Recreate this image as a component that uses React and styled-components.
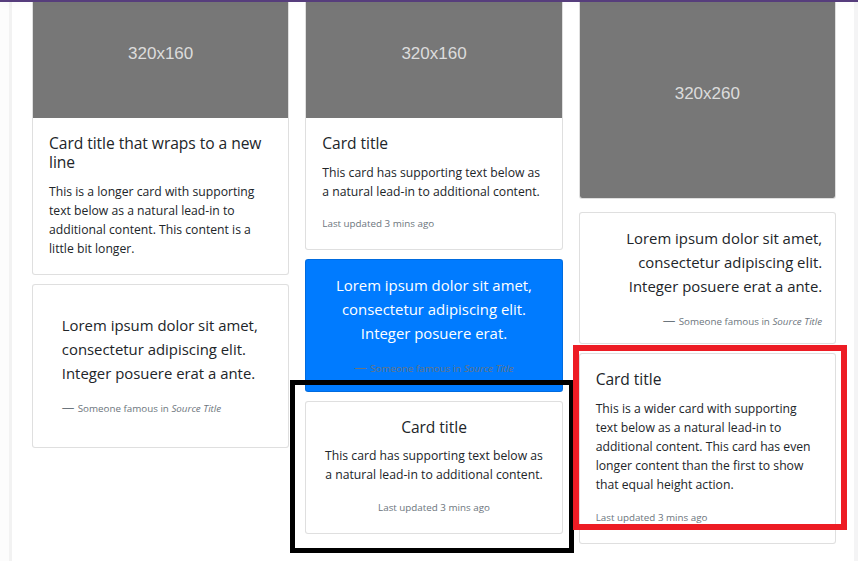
import React from 'react';
import styled, { createGlobalStyle } from 'styled-components';

const GlobalStyle = createGlobalStyle`
  *, *::before, *::after { box-sizing: border-box; }
  html, body { margin: 0; padding: 0; background: #fff; }
  body {
    font-family: "Open Sans", "Noto Sans", sans-serif;
    color: #212529;
    overflow: hidden;
  }
`;

const Page = styled.div`
  position: relative;
  display: flex;
  width: 858px;
  height: 561px;
  overflow: hidden;
  background: #fff;
`;

const TopBar = styled.div`
  position: absolute;
  top: 0;
  left: 0;
  right: 0;
  height: 2px;
  background: #563d7c;
  box-shadow: 0 1px 8px rgba(0, 0, 0, 0.09);
  z-index: 5;
`;

const SideRail = styled.div`
  flex: 0 0 12px;
  background: #fcfcfc;
  border-right: 3px solid #f2f2f2;
`;

const RightRail = styled.div`
  flex: 0 0 4px;
  background: #f4f4f5;
`;

const Main = styled.main`
  flex: 1;
  min-width: 0;
  padding: 0 18px 0 20px;
`;

const CardColumns = styled.div`
  display: grid;
  grid-template-columns: repeat(3, minmax(0, 1fr));
  column-gap: 16px;
  align-items: start;
  margin-top: -11px;
`;

const Column = styled.div`
  display: flex;
  flex-direction: column;
  gap: 9px;
`;

const Card = styled.div`
  display: flex;
  flex-direction: column;
  background: ${(p) => p.$bg || '#fff'};
  color: ${(p) => p.$fg || '#212529'};
  border: 1px solid rgba(0, 0, 0, 0.125);
  border-radius: 3.2px;
  text-align: ${(p) => p.$align || 'left'};
  padding: ${(p) => p.$pad || '0'};
  margin-bottom: ${(p) => p.$after || '0'};
`;

const Placeholder = styled.div`
  height: ${(p) => p.$h}px;
  background: #777;
  display: flex;
  align-items: center;
  justify-content: center;
  color: rgba(255, 255, 255, 0.75);
  font-family: "Liberation Sans", Arial, sans-serif;
  font-size: 17px;
  border-radius: ${(p) => (p.$full ? '2.2px' : '2.2px 2.2px 0 0')};
`;

const CardBody = styled.div`
  padding: 16px;
`;

const CardTitle = styled.h5`
  margin: 0 0 9.6px;
  font-size: 15.6px;
  font-weight: 400;
  line-height: 19px;
  letter-spacing: -0.05px;
`;

const CardText = styled.p`
  margin: 0 0 12.8px;
  font-size: 12.2px;
  line-height: 19px;
  &:last-child {
    margin-bottom: 0;
  }
`;

const Muted = styled.small`
  font-size: 9.8px;
  color: #6c757d;
`;

const Blockquote = styled.blockquote`
  margin: 0;
  padding: ${(p) => (p.$body ? '16px' : '0')};
  font-size: 14.9px;
`;

const Lead = styled.p`
  margin: 0 0 12.8px;
  line-height: 24px;
`;

const QuoteFooter = styled.footer`
  font-size: 12.6px;
  line-height: 19px;
  color: #6c757d;
  &::before {
    content: "\\2014\\00A0";
  }
`;

const QuoteSmall = styled.small`
  font-size: 9.8px;
  cite {
    font-style: italic;
  }
`;

const Highlight = styled.div`
  position: absolute;
  border: ${(p) => p.$w}px solid ${(p) => p.$color};
  pointer-events: none;
  z-index: 4;
`;

function Quote({ text, body }) {
  return (
    <Blockquote $body={body}>
      <Lead>{text}</Lead>
      <QuoteFooter>
        <QuoteSmall>
          Someone famous in <cite title="Source Title">Source Title</cite>
        </QuoteSmall>
      </QuoteFooter>
    </Blockquote>
  );
}

const highlights = [
  { x: 290, y: 380, w: 284, h: 173, b: 5, color: '#000' },
  { x: 573, y: 345, w: 274, h: 185, b: 6, color: '#ed1c24' },
];

export default function App() {
  return (
    <>
      <GlobalStyle />
      <Page>
        <TopBar />
        <SideRail />
        <Main>
          <CardColumns>
            <Column>
              <Card>
                <Placeholder $h={128}>320x160</Placeholder>
                <CardBody>
                  <CardTitle>Card title that wraps to a new line</CardTitle>
                  <CardText>
                    This is a longer card with supporting text below as a natural lead-in to
                    additional content. This content is a little bit longer.
                  </CardText>
                </CardBody>
              </Card>
              <Card $pad="12.8px">
                <Quote
                  body
                  text="Lorem ipsum dolor sit amet, consectetur adipiscing elit. Integer posuere erat a ante."
                />
              </Card>
            </Column>

            <Column>
              <Card>
                <Placeholder $h={128}>320x160</Placeholder>
                <CardBody>
                  <CardTitle>Card title</CardTitle>
                  <CardText>
                    This card has supporting text below as a natural lead-in to additional content.
                  </CardText>
                  <CardText>
                    <Muted>Last updated 3 mins ago</Muted>
                  </CardText>
                </CardBody>
              </Card>
              <Card $bg="#007bff" $fg="#fff" $align="center" $pad="12.8px">
                <Quote text="Lorem ipsum dolor sit amet, consectetur adipiscing elit. Integer posuere erat." />
              </Card>
              <Card $align="center">
                <CardBody>
                  <CardTitle>Card title</CardTitle>
                  <CardText>
                    This card has supporting text below as a natural lead-in to additional content.
                  </CardText>
                  <CardText>
                    <Muted>Last updated 3 mins ago</Muted>
                  </CardText>
                </CardBody>
              </Card>
            </Column>

            <Column>
              <Card $after="4px">
                <Placeholder $h={208} $full>
                  320x260
                </Placeholder>
              </Card>
              <Card $align="right" $pad="12.8px">
                <Quote text="Lorem ipsum dolor sit amet, consectetur adipiscing elit. Integer posuere erat a ante." />
              </Card>
              <Card>
                <CardBody>
                  <CardTitle>Card title</CardTitle>
                  <CardText>
                    This is a wider card with supporting text below as a natural lead-in to
                    additional content. This card has even longer content than the first to show
                    that equal height action.
                  </CardText>
                  <CardText>
                    <Muted>Last updated 3 mins ago</Muted>
                  </CardText>
                </CardBody>
              </Card>
            </Column>
          </CardColumns>
        </Main>
        <RightRail />
        {highlights.map((h, i) => (
          <Highlight
            key={i}
            $w={h.b}
            $color={h.color}
            style={{ left: h.x, top: h.y, width: h.w, height: h.h }}
          />
        ))}
      </Page>
    </>
  );
}
